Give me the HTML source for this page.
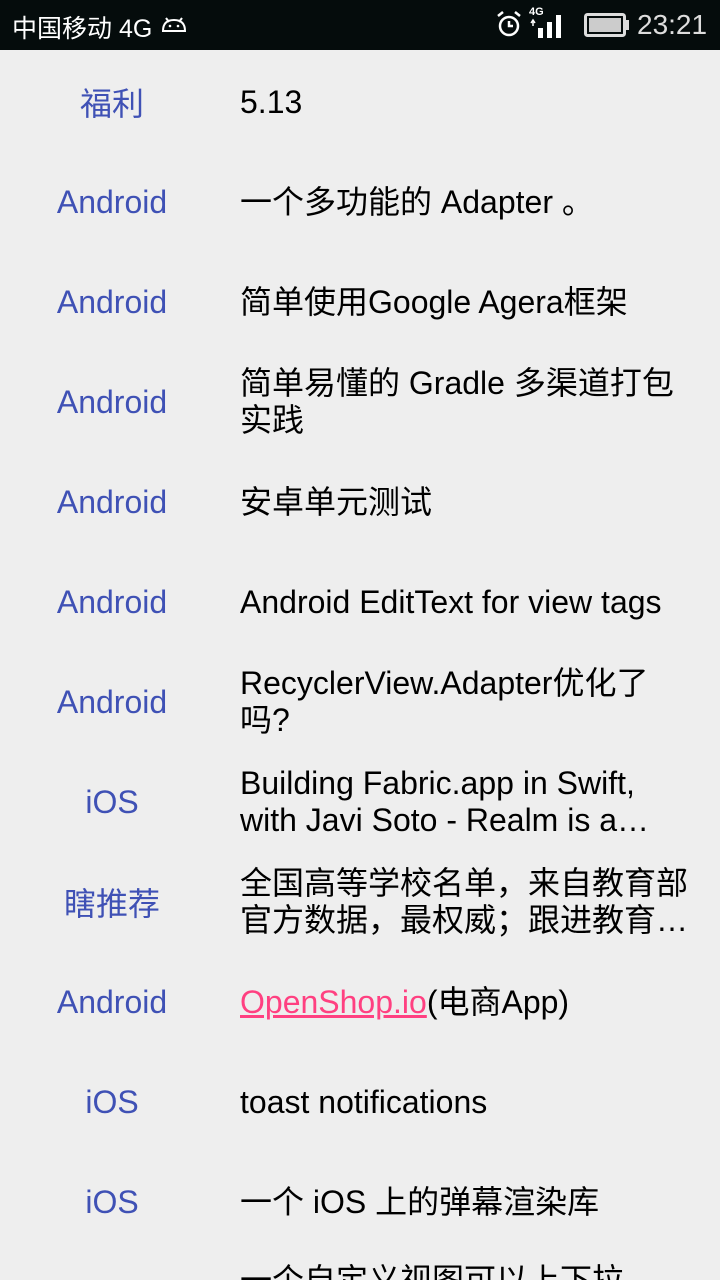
<!DOCTYPE html>
<html style="width:720px;height:1280px;overflow:hidden"><head><meta charset="utf-8"><style>
*{margin:0;padding:0;box-sizing:border-box}
body{width:720px;height:1280px;overflow:hidden;background:#eeeeee;font-family:"Liberation Sans","Noto Sans CJK SC",sans-serif;position:relative}
.sb{position:absolute;top:0;left:0;width:720px;height:50px;background:#050c0c;color:#fff;font-size:25px}
.row{position:absolute;left:0;width:720px;height:100px;display:flex;align-items:center}
.t{width:224px;text-align:center;color:#3f51b5;font-size:32px}
.d{position:absolute;left:240px;width:470px;color:#000;font-size:32px;line-height:37px;overflow:hidden;white-space:nowrap}
a{color:#ff4081;text-decoration:underline}
</style></head><body>
<div class="sb">
<span style="position:absolute;left:12px;top:9px">中国移动 4G</span>
<svg style="position:absolute;left:160px;top:14px" width="28" height="20" viewBox="0 0 28 20"><path d="M3 17 Q3 6 14 6 Q25 6 25 17 Z" fill="none" stroke="#fff" stroke-width="2"/><path d="M6 4 L9 8 M22 4 L19 8" stroke="#fff" stroke-width="2"/><circle cx="10" cy="12" r="1.3" fill="#fff"/><circle cx="18" cy="12" r="1.3" fill="#fff"/></svg>
<svg style="position:absolute;left:496px;top:10px" width="26" height="28" viewBox="0 0 26 28"><circle cx="13" cy="16" r="9" fill="none" stroke="#fff" stroke-width="2.5"/><path d="M13 11 V16 H17" stroke="#fff" stroke-width="2.5" fill="none"/><path d="M2 6 L7 2 M24 6 L19 2" stroke="#fff" stroke-width="2.5"/></svg>
<span style="position:absolute;left:529px;top:6px;font-size:11px;font-weight:bold">4G</span>
<svg style="position:absolute;left:530px;top:12px" width="40" height="26" viewBox="0 0 40 26"><rect x="8" y="16" width="5" height="10" fill="#fff"/><rect x="17" y="10" width="5" height="16" fill="#fff"/><rect x="26" y="3" width="5" height="23" fill="#fff"/><path d="M3 8 V14 M1 11 L3 8 L5 11" stroke="#fff" stroke-width="1.5" fill="none"/></svg>
<svg style="position:absolute;left:584px;top:13px" width="46" height="24" viewBox="0 0 46 24"><rect x="1.5" y="1.5" width="39" height="21" rx="2" fill="none" stroke="#ddd" stroke-width="3"/><rect x="5" y="5" width="32" height="14" fill="#ccc"/><rect x="41" y="7" width="4" height="10" fill="#ddd"/></svg>
<span style="position:absolute;left:637px;top:9px;font-size:28px;color:#ddd">23:21</span>
</div>
<div class="row" style="top:52px"><div class="t">福利</div><div class="d">5.13</div></div>
<div class="row" style="top:152px"><div class="t">Android</div><div class="d">一个多功能的 Adapter 。</div></div>
<div class="row" style="top:252px"><div class="t">Android</div><div class="d">简单使用Google Agera框架</div></div>
<div class="row" style="top:352px"><div class="t">Android</div><div class="d">简单易懂的 Gradle 多渠道打包<br>实践</div></div>
<div class="row" style="top:452px"><div class="t">Android</div><div class="d">安卓单元测试</div></div>
<div class="row" style="top:552px"><div class="t">Android</div><div class="d">Android EditText for view tags</div></div>
<div class="row" style="top:652px"><div class="t">Android</div><div class="d">RecyclerView.Adapter优化了<br>吗?</div></div>
<div class="row" style="top:752px"><div class="t">iOS</div><div class="d">Building Fabric.app in Swift,<br>with Javi Soto - Realm is a…</div></div>
<div class="row" style="top:852px"><div class="t">瞎推荐</div><div class="d">全国高等学校名单，来自教育部<br>官方数据，最权威；跟进教育…</div></div>
<div class="row" style="top:952px"><div class="t">Android</div><div class="d"><a>OpenShop.io</a>(电商App)</div></div>
<div class="row" style="top:1052px"><div class="t">iOS</div><div class="d">toast notifications</div></div>
<div class="row" style="top:1152px"><div class="t">iOS</div><div class="d">一个 iOS 上的弹幕渲染库</div></div>
<div style="position:absolute;left:240px;top:1262px;font-size:32px;line-height:37px;color:#000;white-space:nowrap">一个自定义视图可以上下拉</div>
</body></html>
